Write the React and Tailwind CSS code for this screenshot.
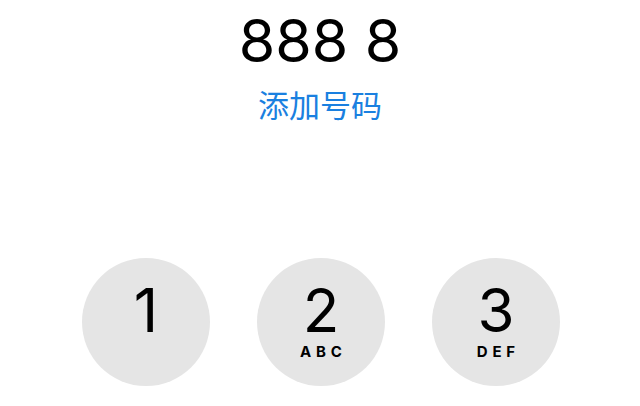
import React from "react";

const KEYS = [
  { digit: "1", letters: "" },
  { digit: "2", letters: "ABC" },
  { digit: "3", letters: "DEF" },
];

const Key = ({ digit, letters }) => (
  <div className="w-[128px] h-[128px] rounded-full bg-[#e5e5e5] flex flex-col items-center pt-[23px]">
    <span className="text-[60px] leading-[58px] font-normal text-black">{digit}</span>
    <span className="h-[16px] mt-[5px] text-[15px] leading-[16px] font-bold tracking-[0.32em] pl-[0.32em] text-black">
      {letters}
    </span>
  </div>
);

export default function App() {
  return (
    <div
      className="w-[640px] h-[406px] bg-white overflow-hidden flex flex-col items-center"
      style={{ fontFamily: 'Inter, "Noto Sans CJK SC", sans-serif' }}
    >
      <div className="mt-[9px] text-[59px] leading-[64px] font-normal text-black">888 8</div>
      <div
        className="mt-[13px] text-[31px] leading-[36px] text-[#1a80e0]"
        style={{ fontFamily: '"Noto Sans CJK SC", sans-serif' }}
      >
        添加号码
      </div>
      <div className="mt-[136px] flex gap-[47px] ml-[2px]">
        {KEYS.map((k) => (
          <Key key={k.digit} {...k} />
        ))}
      </div>
    </div>
  );
}
